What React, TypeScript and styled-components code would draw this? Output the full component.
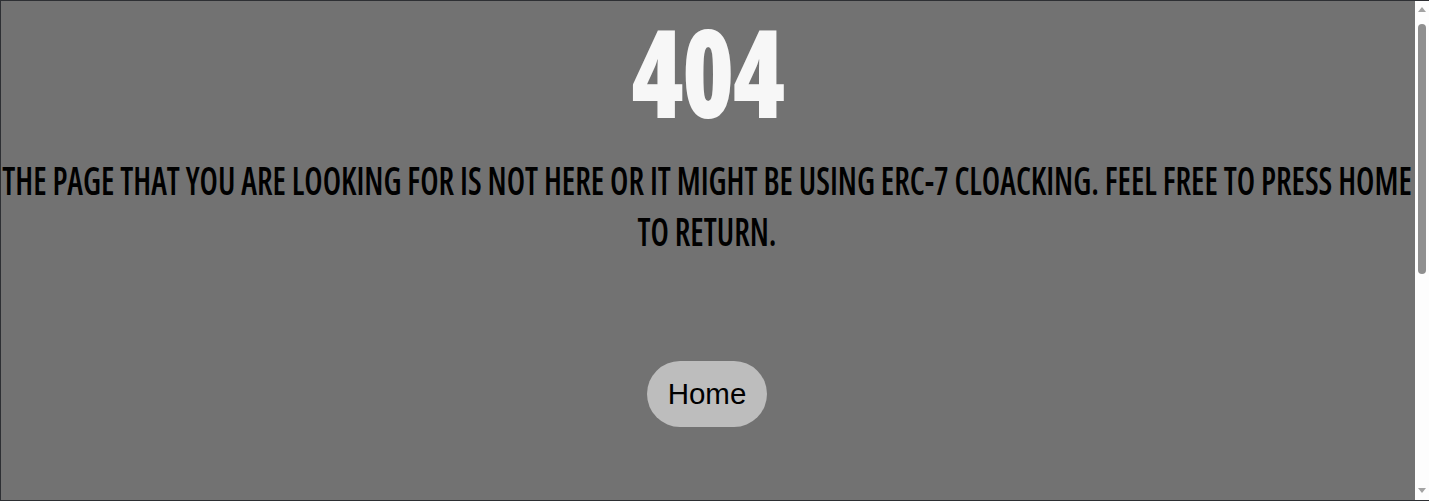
import React from "react";
import styled, { createGlobalStyle } from "styled-components";

const GlobalStyle = createGlobalStyle`
  html, body {
    margin: 0;
    padding: 0;
    background: #727272;
  }
  body {
    font-family: "Liberation Sans", Arial, sans-serif;
  }
`;

const Frame = styled.div`
  position: fixed;
  inset: 0;
  border-top: 1px solid #2d2f33;
  border-left: 1px solid #2d2f33;
  border-bottom: 1px solid #2d2f33;
  pointer-events: none;
  z-index: 10;
`;

const ScrollTrack = styled.div`
  position: fixed;
  top: 0;
  right: 0;
  bottom: 0;
  width: 14px;
  background: #fdfdfd;
  display: flex;
  flex-direction: column;
  align-items: center;
  padding: 7px 0 8px;
  box-sizing: border-box;
  z-index: 9;
`;

const Arrow = styled.div<{ $down?: boolean }>`
  width: 0;
  height: 0;
  border-left: 4px solid transparent;
  border-right: 4px solid transparent;
  ${(p) => (p.$down ? "border-top: 5px solid #a3a3a3;" : "border-bottom: 5px solid #a3a3a3;")}
`;

const Thumb = styled.div`
  width: 8px;
  height: 250px;
  margin-top: 12px;
  border-radius: 4px;
  background: #8f8f8f;
`;

const Spacer = styled.div`
  flex: 1;
`;

const Page = styled.main`
  min-height: 950px;
  display: flex;
  flex-direction: column;
  align-items: center;
  text-align: center;
  padding: 9px 15px 0 0;
  box-sizing: border-box;
`;

const Code = styled.h1`
  margin: 0;
  font-family: "Open Sans", "Liberation Sans", sans-serif;
  font-stretch: 75%;
  font-weight: 800;
  font-size: 123px;
  line-height: 123px;
  color: #f7f7f7;
  letter-spacing: -2px;
  transform: scaleX(0.86);
`;

const Message = styled.p`
  margin: 32px 0 0;
  font-family: "Open Sans", "Liberation Sans", sans-serif;
  font-stretch: 75%;
  font-weight: 600;
  font-size: 32.3px;
  line-height: 41.4px;
  color: #000;
  text-transform: uppercase;
  transform: scaleY(1.255);
`;

const HomeButton = styled.button`
  margin-top: 114px;
  height: 66px;
  padding: 0 21px;
  border: none;
  border-radius: 33px;
  background: #bdbdbd;
  color: #000;
  font-family: "Liberation Sans", Arial, sans-serif;
  font-size: 29.5px;
  cursor: pointer;
`;

export default function App() {
  return (
    <>
      <GlobalStyle />
      <Frame />
      <ScrollTrack aria-hidden="true">
        <Arrow />
        <Thumb />
        <Spacer />
        <Arrow $down />
      </ScrollTrack>
      <Page>
        <Code>404</Code>
        <Message>
          The page that you are looking for is not here or it might be using ERC-7 cloacking. Feel free to press home
          to return.
        </Message>
        <HomeButton type="button">Home</HomeButton>
      </Page>
    </>
  );
}
